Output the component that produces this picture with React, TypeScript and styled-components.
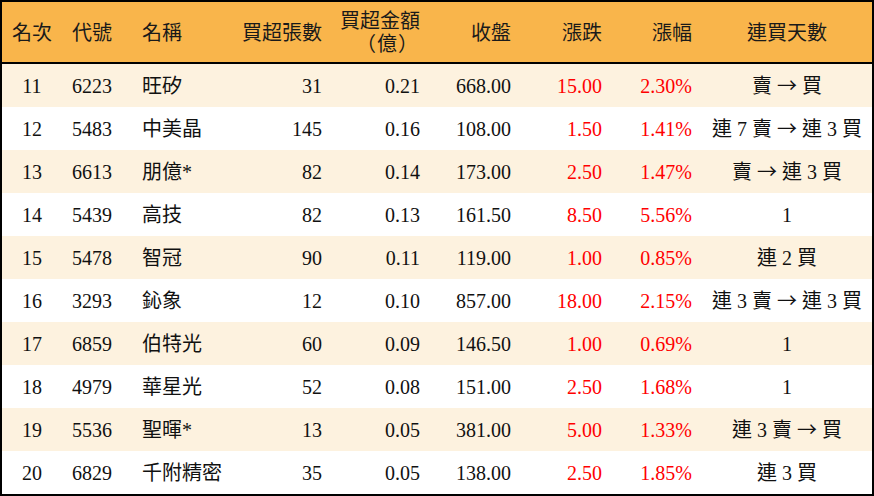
import React from "react";
import styled, { createGlobalStyle } from "styled-components";

const GlobalStyle = createGlobalStyle`
  html, body {
    margin: 0;
    padding: 0;
    background: #ffffff;
  }
  body {
    font-family: "Liberation Serif", "Noto Sans CJK TC", serif;
  }
`;

type Align = "left" | "right" | "center";

const COLS = "60px 70px 100px 100px 98px 91px 91px 90px 170px";

const Table = styled.div`
  width: 874px;
  height: 496px;
  box-sizing: border-box;
  border: 2px solid #000;
  display: flex;
  flex-direction: column;
  font-family: "Liberation Serif", "Noto Sans CJK TC", serif;
  font-size: 20px;
  color: #111;
`;

const HeaderRow = styled.div`
  display: grid;
  grid-template-columns: ${COLS};
  height: 62px;
  box-sizing: border-box;
  background: #f9b54b;
  border-bottom: 2px solid #000;
  color: #1a1a1a;
  padding-top: 1px;
`;

const BodyRow = styled.div<{ $alt: boolean }>`
  display: grid;
  grid-template-columns: ${COLS};
  height: 43px;
  background: ${(p) => (p.$alt ? "#fdf2df" : "#ffffff")};
`;

const Cell = styled.div<{ $align: Align; $red?: boolean }>`
  display: flex;
  align-items: center;
  justify-content: ${(p) =>
    p.$align === "left" ? "flex-start" : p.$align === "right" ? "flex-end" : "center"};
  padding: ${(p) =>
    p.$align === "left" ? "0 0 0 10px" : p.$align === "right" ? "0 10px 0 0" : "0"};
  white-space: pre;
  color: ${(p) => (p.$red ? "#ff0000" : "inherit")};
  line-height: 1;
`;

const TwoLine = styled.div`
  display: flex;
  flex-direction: column;
  align-items: center;
  gap: 3px;
`;

const Line = styled.div<{ $shift?: number }>`
  display: flex;
  justify-content: center;
  height: 20px;
  line-height: 20px;
  padding-left: ${(p) => p.$shift ?? 0}px;
`;

const Glyph = styled.span<{ $w?: number }>`
  display: inline-block;
  width: ${(p) => p.$w ?? 20}px;
  text-align: center;
`;

const Arrow = styled.span`
  font-family: "Noto Sans CJK TC", sans-serif;
  display: inline-block;
  width: 20px;
  text-align: center;
`;

const cols: { label: React.ReactNode; align: Align }[] = [
  { label: "名次", align: "center" },
  { label: "代號", align: "left" },
  { label: "名稱", align: "left" },
  { label: "買超張數", align: "right" },
  {
    label: (
      <TwoLine>
        <Line>買超金額</Line>
        <Line $shift={14}>
          <Glyph $w={22}>（</Glyph>
          <Glyph>億</Glyph>
          <Glyph $w={22}>）</Glyph>
        </Line>
      </TwoLine>
    ),
    align: "right",
  },
  { label: "收盤", align: "right" },
  { label: "漲跌", align: "right" },
  { label: "漲幅", align: "right" },
  { label: "連買天數", align: "center" },
];

const rows: string[][] = [
  ["11", "6223", "旺矽", "31", "0.21", "668.00", "15.00", "2.30%", "賣 → 買"],
  ["12", "5483", "中美晶", "145", "0.16", "108.00", "1.50", "1.41%", "連 7 賣 → 連 3 買"],
  ["13", "6613", "朋億*", "82", "0.14", "173.00", "2.50", "1.47%", "賣 → 連 3 買"],
  ["14", "5439", "高技", "82", "0.13", "161.50", "8.50", "5.56%", "1"],
  ["15", "5478", "智冠", "90", "0.11", "119.00", "1.00", "0.85%", "連 2 買"],
  ["16", "3293", "鈊象", "12", "0.10", "857.00", "18.00", "2.15%", "連 3 賣 → 連 3 買"],
  ["17", "6859", "伯特光", "60", "0.09", "146.50", "1.00", "0.69%", "1"],
  ["18", "4979", "華星光", "52", "0.08", "151.00", "2.50", "1.68%", "1"],
  ["19", "5536", "聖暉*", "13", "0.05", "381.00", "5.00", "1.33%", "連 3 賣 → 買"],
  ["20", "6829", "千附精密", "35", "0.05", "138.00", "2.50", "1.85%", "連 3 買"],
];

function renderValue(v: string) {
  if (!v.includes("→")) return v;
  const parts = v.split("→");
  return (
    <span>
      {parts[0]}
      <Arrow>→</Arrow>
      {parts[1]}
    </span>
  );
}

export default function App() {
  return (
    <>
      <GlobalStyle />
      <Table>
        <HeaderRow>
          {cols.map((c, i) => (
            <Cell key={i} $align={c.align}>
              {c.label}
            </Cell>
          ))}
        </HeaderRow>
        {rows.map((r, ri) => (
          <BodyRow key={ri} $alt={ri % 2 === 0}>
            {r.map((v, ci) => (
              <Cell key={ci} $align={cols[ci].align} $red={ci === 6 || ci === 7}>
                {renderValue(v)}
              </Cell>
            ))}
          </BodyRow>
        ))}
      </Table>
    </>
  );
}
